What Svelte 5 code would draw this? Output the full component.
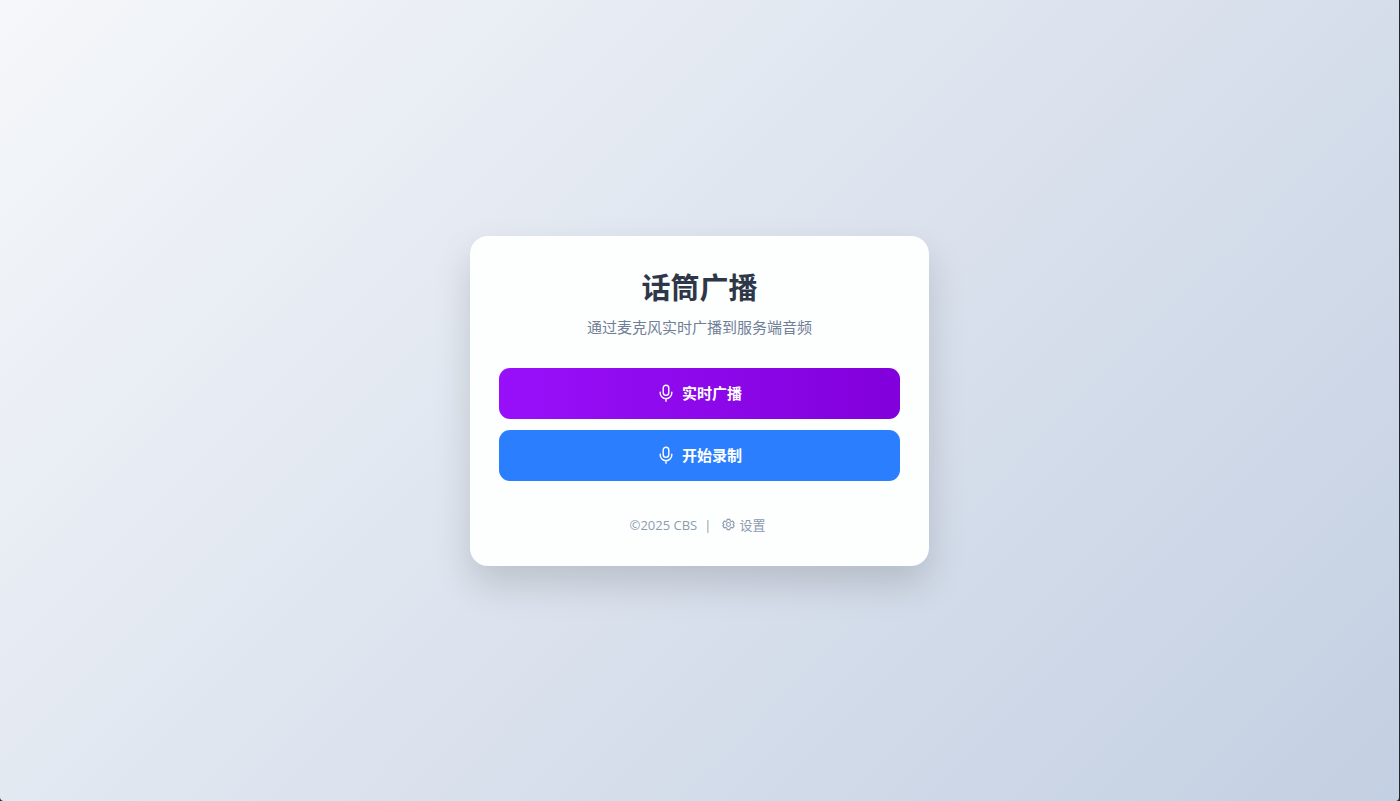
<script lang="ts">
	let mode: 'idle' | 'live' | 'record' = 'idle';

	const actions = [
		{ id: 'live', label: '实时广播' },
		{ id: 'record', label: '开始录制' }
	] as const;
</script>

<main class="page">
	<section class="card">
		<h1>话筒广播</h1>
		<p class="subtitle">通过麦克风实时广播到服务端音频</p>

		<div class="actions">
			{#each actions as action}
				<button type="button" class="btn {action.id}" on:click={() => (mode = action.id)}>
					<svg class="mic" viewBox="0 0 18 18" aria-hidden="true">
						<rect x="6.2" y="1.2" width="5.6" height="10.2" rx="2.8" />
						<path d="M3.2 8.2v.8a5.8 5.8 0 0 0 11.6 0v-.8M9 14.8v2.4" />
					</svg>
					<span>{action.label}</span>
				</button>
			{/each}
		</div>

		<footer>
			<span>©2025 CBS</span>
			<span class="divider">|</span>
			<a href="#settings">
				<svg class="gear" viewBox="0 0 24 24" aria-hidden="true">
					<path d="M9.6 2.5h4.8l.8 3 2 1.2 3-.9 2.3 4.1-2.2 2.1 2.2 2.1-2.3 4.1-3-.9-2 1.2-.8 3H9.6l-.8-3-2-1.2-3 .9-2.3-4.1L3.7 12 1.500 9.900l2.300-4.100 3 .9 2-1.200z" />
					<circle cx="12" cy="12" r="3.6" />
				</svg>
				<span>设置</span>
			</a>
		</footer>
	</section>
</main>

<style>
	:global(html) {
		background: #20242b;
	}

	:global(body) {
		margin: 0;
	}

	.page {
		box-sizing: border-box;
		display: flex;
		align-items: center;
		justify-content: center;
		min-height: 100vh;
		padding: 20px;
		border-right: 1px solid #20242b;
		border-radius: 0 0 4px 4px;
		background: linear-gradient(135deg, #f5f7fa 0%, #c3cfe2 100%);
		font-family: 'Open Sans', 'Noto Sans CJK SC', sans-serif;
	}

	.card {
		box-sizing: border-box;
		width: 100%;
		max-width: 459px;
		padding: 30px 29px;
		border-radius: 18px;
		background: #fdfefe;
		box-shadow: 0 18px 37px rgba(0, 0, 0, 0.15);
		text-align: center;
	}

	h1 {
		margin: 0 0 6px;
		color: #2d3748;
		font-size: 29px;
		font-weight: 700;
		line-height: 44px;
	}

	.subtitle {
		margin: 0 0 30px;
		color: #718096;
		font-size: 15px;
		line-height: 22px;
	}

	.actions {
		display: flex;
		flex-direction: column;
		gap: 11px;
	}

	.btn {
		display: flex;
		align-items: center;
		justify-content: center;
		gap: 7px;
		height: 51px;
		padding: 0 20px;
		border: none;
		border-radius: 11px;
		color: white;
		font-family: inherit;
		font-size: 15px;
		font-weight: 700;
		line-height: 22px;
		cursor: pointer;
	}

	.live {
		background: linear-gradient(90deg, #9810fa 0%, #8200db 100%);
	}

	.record {
		background: #2b7fff;
	}

	svg {
		fill: none;
		stroke: currentColor;
		stroke-linecap: round;
		stroke-linejoin: round;
	}

	.mic {
		width: 18px;
		height: 18px;
		stroke-width: 1.4;
	}

	footer {
		display: flex;
		align-items: center;
		justify-content: center;
		margin-top: 33px;
		padding-right: 4px;
		color: #8d9bb0;
		font-size: 13px;
		line-height: 22px;
	}

	.divider {
		margin: 0 11px 0 7px;
	}

	a {
		display: flex;
		align-items: center;
		gap: 4px;
		color: inherit;
		text-decoration: none;
	}

	.gear {
		width: 13px;
		height: 13px;
		stroke-width: 2;
	}
</style>
